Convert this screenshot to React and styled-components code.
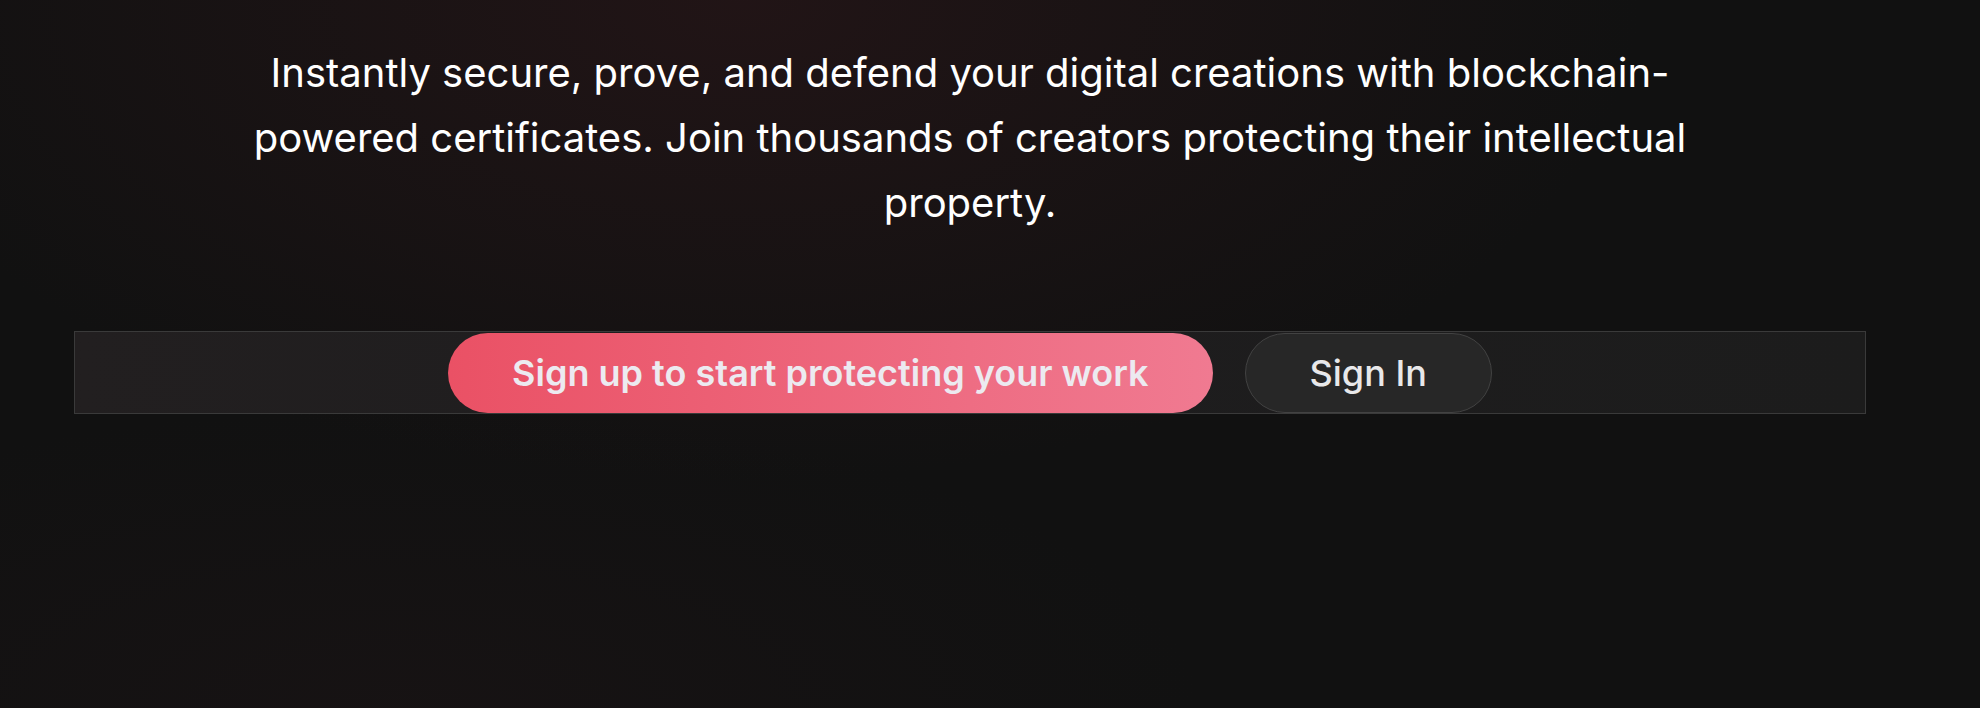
import React from 'react';
import styled, { createGlobalStyle } from 'styled-components';

const GlobalStyle = createGlobalStyle`
  html, body {
    margin: 0;
    padding: 0;
    background: #111111;
  }
  body {
    font-family: Inter, "Liberation Sans", sans-serif;
    -webkit-font-smoothing: antialiased;
  }
`;

const Page = styled.main`
  min-height: 708px;
  box-sizing: border-box;
  padding: 40px 114px 0 74px;
  display: flex;
  flex-direction: column;
  align-items: center;
  background:
    radial-gradient(ellipse 900px 480px at 740px 0px, rgba(36, 21, 23, 0.85), rgba(36, 21, 23, 0) 100%),
    radial-gradient(ellipse 800px 300px at 400px 708px, rgba(24, 19, 20, 0.8), rgba(24, 19, 20, 0) 100%),
    #111111;
`;

const Lead = styled.p`
  margin: 0;
  max-width: 1480px;
  text-align: center;
  color: #ffffff;
  font-size: 40px;
  line-height: 65px;
  font-weight: 400;
`;

const ActionBar = styled.div`
  margin-top: 96px;
  align-self: stretch;
  box-sizing: border-box;
  height: 83px;
  border: 1px solid #3a3a3a;
  background: linear-gradient(90deg, #221f20 0%, #1e1d1e 50%, #1c1c1c 100%);
  display: flex;
  align-items: center;
  justify-content: center;
  gap: 32px;
`;

const PillButton = styled.button`
  height: 80px;
  box-sizing: border-box;
  padding: 0 64px;
  border-radius: 40px;
  font-family: Inter, "Liberation Sans", sans-serif;
  font-size: 36px;
  cursor: pointer;
  white-space: nowrap;
  border: ${p => (p.$primary ? 'none' : '1.5px solid #424242')};
  background: ${p => (p.$primary ? 'linear-gradient(90deg, #ea5165 0%, #f07a91 100%)' : '#272727')};
  color: ${p => (p.$primary ? '#eceaf0' : '#e8e8ea')};
  font-weight: ${p => (p.$primary ? 600 : 500)};
`;

export default function App() {
  return (
    <>
      <GlobalStyle />
      <Page>
        <Lead>
          Instantly secure, prove, and defend your digital creations with blockchain-powered
          certificates. Join thousands of creators protecting their intellectual property.
        </Lead>
        <ActionBar>
          <PillButton $primary>Sign up to start protecting your work</PillButton>
          <PillButton>Sign In</PillButton>
        </ActionBar>
      </Page>
    </>
  );
}
